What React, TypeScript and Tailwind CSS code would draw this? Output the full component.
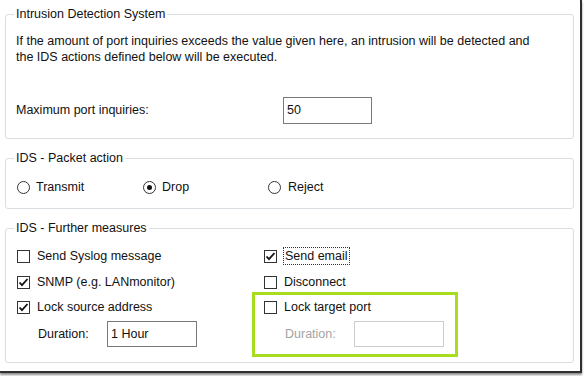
import type { ReactNode } from "react"

const font = { fontFamily: '"Liberation Sans", Arial, sans-serif' }

function Group({ title, children, className = "" }: { title: string; children: ReactNode; className?: string }) {
  return (
    <fieldset className={`rounded-[3px] border border-[#d9dee3] px-[8px] ${className}`}>
      <legend className="px-[2px] leading-[16px]">{title}</legend>
      {children}
    </fieldset>
  )
}

function Check({ checked = false }: { checked?: boolean }) {
  return (
    <span className="flex h-[13px] w-[13px] shrink-0 items-center justify-center border border-[#333] bg-white">
      {checked && (
        <svg width="11" height="11" viewBox="0 0 11 11">
          <path d="M1.5 5.5 L4 8.2 L9.5 2" fill="none" stroke="#111" strokeWidth="1.8" />
        </svg>
      )}
    </span>
  )
}

function Radio({ checked = false }: { checked?: boolean }) {
  return (
    <span className="flex h-[13px] w-[13px] shrink-0 items-center justify-center rounded-full border border-[#333] bg-white">
      {checked && <span className="h-[5px] w-[5px] rounded-full bg-[#111]" />}
    </span>
  )
}

function CheckRow({ label, checked, focused }: { label: string; checked?: boolean; focused?: boolean }) {
  return (
    <div className="flex h-[16px] items-center">
      <Check checked={checked} />
      {focused ? (
        <span className="ml-[6px] border border-dotted border-[#333] px-[1px] leading-[16px]">{label}</span>
      ) : (
        <span className="ml-[7px] leading-[16px]">{label}</span>
      )}
    </div>
  )
}

export default function App() {
  return (
    <div className="h-[376px] w-[584px] overflow-hidden bg-white text-[12.5px] text-[#111]" style={font}>
      <div className="h-[373px] w-[582px] border-b-2 border-r-2 border-[#2f2f2f] pl-[5px] pt-[6px] shadow-[0_2px_2px_rgba(0,0,0,0.45)]">
        <div className="flex w-[569px] flex-col gap-[11px]">
          <Group title="Intrusion Detection System" className="pb-[14px] pt-[11px]">
            <p className="pl-[2px] leading-[16px]">
              If the amount of port inquiries exceeds the value given here, an intrusion will be detected and
              <br />
              the IDS actions defined below will be executed.
            </p>
            <div className="mt-[32px] flex h-[27px] items-center pl-[2px]">
              <span className="w-[267px]">Maximum port inquiries:</span>
              <div className="flex h-[27px] w-[89px] items-center border border-[#7a7a7a] bg-white px-[3px]">50</div>
            </div>
          </Group>

          <Group title="IDS - Packet action" className="pb-[13px] pt-[13px]">
            <div className="flex h-[16px] items-center pl-[3px]">
              <label className="flex w-[126px] items-center gap-[6px]">
                <Radio />
                <span>Transmit</span>
              </label>
              <label className="flex w-[125px] items-center gap-[6px]">
                <Radio checked />
                <span>Drop</span>
              </label>
              <label className="flex items-center gap-[7px]">
                <Radio />
                <span>Reject</span>
              </label>
            </div>
          </Group>

          <Group title="IDS - Further measures" className="pb-[15px] pt-[12px]">
            <div className="grid grid-cols-[247px_1fr] items-start pl-[3px]">
              <div className="flex flex-col">
                <CheckRow label="Send Syslog message" />
                <div className="mt-[10px]">
                  <CheckRow label="SNMP (e.g. LANmonitor)" checked />
                </div>
                <div className="mt-[9px]">
                  <CheckRow label="Lock source address" checked />
                </div>
                <div className="mt-[6px] flex h-[26px] items-center pl-[21px]">
                  <span className="w-[69px]">Duration:</span>
                  <div className="flex h-[26px] w-[90px] items-center border border-[#7a7a7a] bg-white px-[3px]">1 Hour</div>
                </div>
              </div>

              <div className="flex flex-col">
                <CheckRow label="Send email" checked focused />
                <div className="mt-[10px]">
                  <CheckRow label="Disconnect" />
                </div>
                <div className="-mb-[10px] -ml-[12px] mt-[2px] w-[206px] border-[3px] border-[#a8dc1e] pb-[7px] pl-[9px] pt-[4px]">
                  <CheckRow label="Lock target port" />
                  <div className="mt-[6px] flex h-[26px] items-center pl-[21px]">
                    <span className="w-[69px] text-[#a3a3a3]">Duration:</span>
                    <div className="h-[26px] w-[90px] border border-[#cccccc] bg-white" />
                  </div>
                </div>
              </div>
            </div>
          </Group>
        </div>
      </div>
    </div>
  )
}
